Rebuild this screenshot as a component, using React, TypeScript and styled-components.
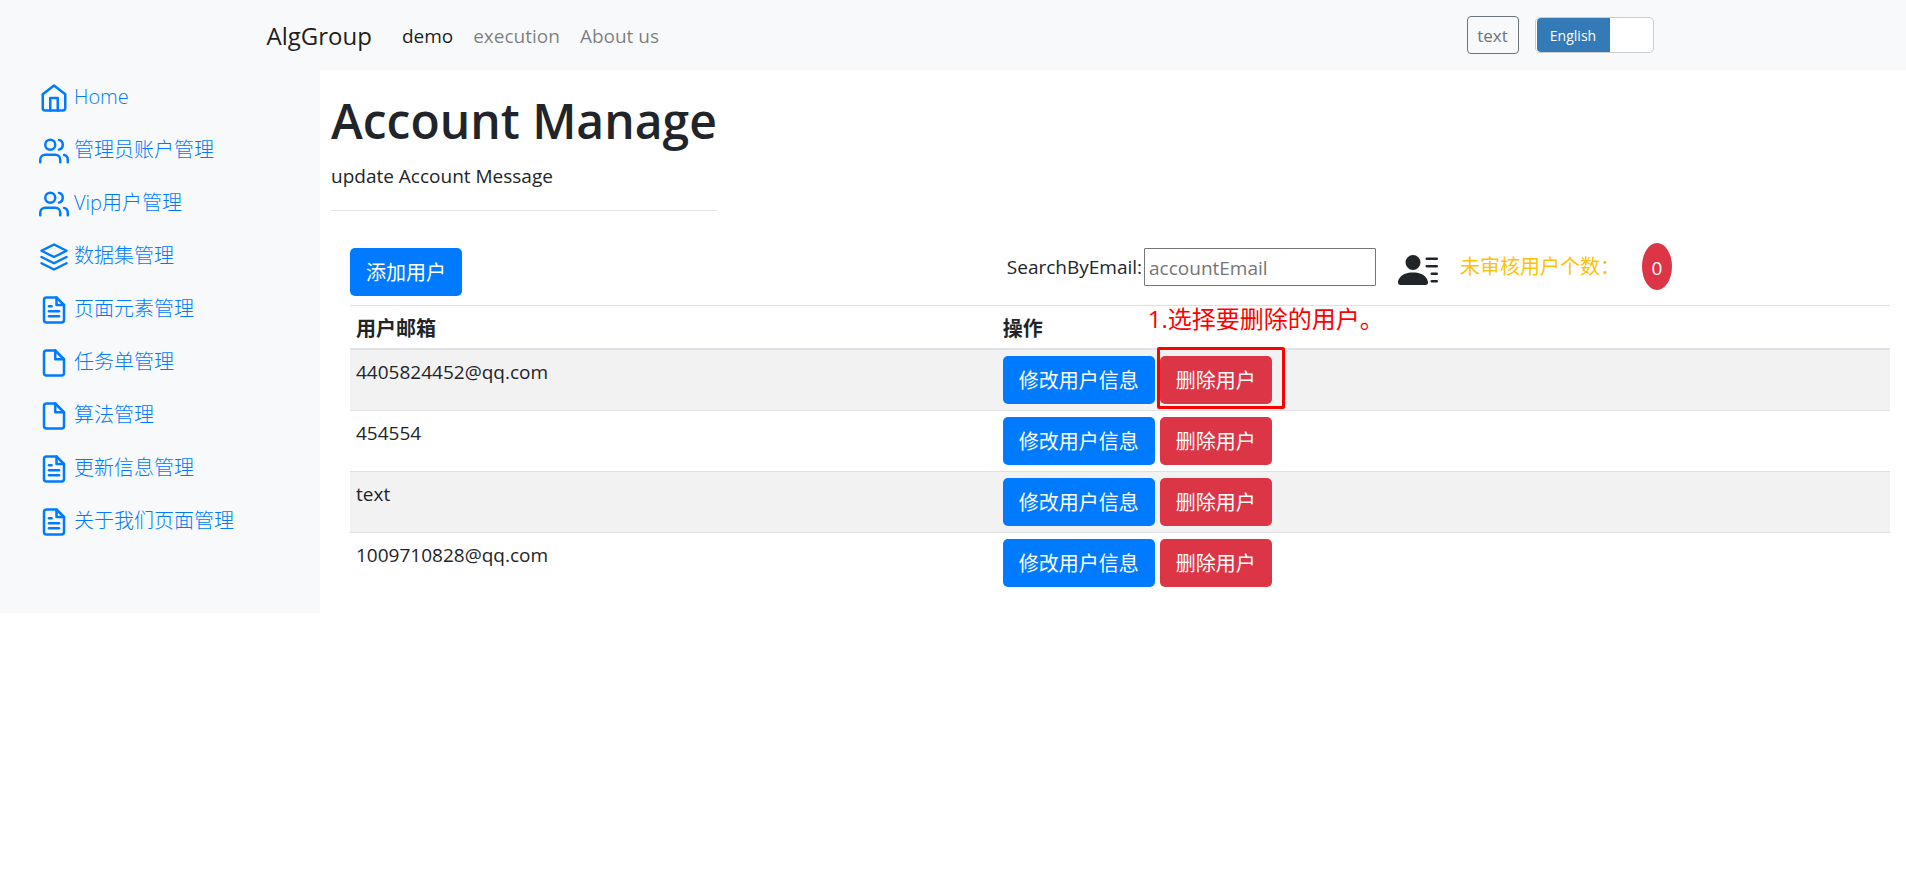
import React, { useState } from "react";
import styled, { createGlobalStyle, css } from "styled-components";
import { BsPersonLinesFill } from "react-icons/bs";

const GlobalStyle = createGlobalStyle`
  *, *::before, *::after { box-sizing: border-box; }
  body {
    margin: 0;
    background: #fff;
    color: #212529;
    font-family: "Open Sans", "Noto Sans CJK SC", sans-serif;
    font-size: 19px;
    line-height: 30px;
  }
  button, input { font-family: inherit; font-size: inherit; line-height: inherit; }
  a { text-decoration: none; }
`;

const TopBar = styled.header`
  background: #f8f9fa;
`;

const TopBarInner = styled.div`
  display: flex;
  align-items: center;
  max-width: 1425px;
  height: 70px;
  margin: 0 auto;
  padding: 0 12px 0 26px;
`;

const Brand = styled.a`
  margin-right: 30px;
  padding-top: 2px;
  color: rgba(0, 0, 0, 0.9);
  font-size: 24px;
`;

const TopNav = styled.nav`
  display: flex;
  flex: 1;
  gap: 20px;
  padding-top: 2px;
`;

const TopNavLink = styled.a<{ $active?: boolean }>`
  color: ${(p) => (p.$active ? "rgba(0, 0, 0, 0.9)" : "rgba(0, 0, 0, 0.5)")};
`;

const OutlineButton = styled.button`
  width: 52px;
  height: 38px;
  margin-right: 16px;
  padding: 2px 0 0;
  border: 1px solid #6c757d;
  border-radius: 4px;
  background: transparent;
  color: #6c757d;
  font-size: 17px;
`;

const Switch = styled.button<{ $on: boolean }>`
  display: flex;
  justify-content: ${(p) => (p.$on ? "flex-start" : "flex-end")};
  width: 119px;
  height: 36px;
  padding: 0 1px;
  border: 1px solid #ccc;
  border-radius: 5px;
  overflow: hidden;
  background: #fff;
`;

const SwitchFace = styled.span`
  width: 73px;
  height: 34px;
  border-radius: 4px 0 0 4px;
  background: #337ab7;
  color: #fff;
  font-size: 14px;
  line-height: 36px;
  text-align: center;
`;

const Body = styled.div`
  display: flex;
`;

const Sidebar = styled.nav`
  flex: 0 0 320px;
  background: #f8f9fa;
`;

const SideList = styled.ul`
  margin: 0;
  padding: 0 0 0 39px;
  list-style: none;
`;

const SideLink = styled.a`
  display: flex;
  align-items: center;
  gap: 5px;
  height: 53px;
  color: #007bff;
  font-size: 20px;
  font-weight: 300;

  svg { margin-top: 3px; }
`;

const Main = styled.main`
  flex: 1;
  min-width: 0;
  padding: 21px 16px 20px 11px;
`;

const Intro = styled.section`
  width: fit-content;
  padding-bottom: 19px;
  border-bottom: 1px solid #e5e5e5;
`;

const Title = styled.h1`
  margin: 0 0 10px;
  font-size: 48px;
  font-weight: 600;
  line-height: 60px;
`;

const Subtitle = styled.p`
  margin: 0;
`;

const Content = styled.section`
  padding: 32px 0 0 19px;
`;

const Toolbar = styled.div`
  display: grid;
  grid-template-columns: 42% 1fr;
  height: 62px;
  padding-top: 5px;
`;

const SearchArea = styled.div`
  display: flex;
  align-items: flex-start;
  gap: 22px;
  padding-left: 10px;

  svg { margin-top: 2px; }
`;

const SearchLabel = styled.label`
  display: flex;
  align-items: center;
  gap: 2px;
  white-space: nowrap;
`;

const SearchInput = styled.input`
  width: 232px;
  height: 38px;
  padding: 2px 4px 0;
  border: 1px solid #767676;
  border-radius: 1px;

  &::placeholder { color: #757575; opacity: 1; }
`;

const PendingText = styled.span`
  color: #ffc107;
  font-size: 20px;
  line-height: 38px;
`;

const PendingCount = styled.span`
  width: 30px;
  height: 47px;
  margin-top: -5px;
  border-radius: 50%;
  background: #dc3545;
  color: #fff;
  line-height: 50px;
  text-align: center;
`;

const Button = styled.button<{ $tone: "primary" | "danger" }>`
  height: 48px;
  padding: 2px 16px 0;
  border: 0;
  border-radius: 5px;
  background: ${(p) => (p.$tone === "primary" ? "#007bff" : "#dc3545")};
  color: #fff;
  font-size: 20px;
  white-space: nowrap;
`;

const Table = styled.table`
  width: 100%;
  border-collapse: separate;
  border-spacing: 0;
  table-layout: fixed;
  border-top: 1px solid #dee2e6;
`;

const HeadCell = styled.th<{ $wide?: boolean }>`
  ${(p) => p.$wide && css`width: 42%;`}
  height: 44px;
  padding: 8px 6px 4px;
  border-bottom: 2px solid #dee2e6;
  font-size: 20px;
  font-weight: 700;
  text-align: left;
`;

const Row = styled.tr`
  &:nth-child(odd) { background: #f2f2f2; }
  &:not(:last-child) td { border-bottom: 1px solid #dee2e6; }
`;

const Cell = styled.td`
  padding: 6px;
  vertical-align: top;
`;

const Email = styled.div`
  padding-top: 1px;
`;

const Actions = styled.div`
  display: flex;
  gap: 5px;
`;

const Marked = styled.div`
  position: relative;
`;

const MarkBox = styled.div`
  position: absolute;
  top: -9px;
  left: -3px;
  width: 128px;
  height: 62px;
  border: 3px solid #ff0000;
  border-radius: 2px;
  pointer-events: none;
`;

const MarkText = styled.div`
  position: absolute;
  bottom: 70px;
  left: -12px;
  color: #ff0000;
  font-size: 24px;
  white-space: nowrap;
`;

type IconName = "home" | "users" | "layers" | "fileText" | "file";

const iconShapes: Record<IconName, React.ReactNode> = {
  home: (
    <>
      <path d="M3 9l9-7 9 7v11a2 2 0 0 1-2 2H5a2 2 0 0 1-2-2z" />
      <polyline points="9 22 9 12 15 12 15 22" />
    </>
  ),
  users: (
    <>
      <path d="M17 21v-2a4 4 0 0 0-4-4H5a4 4 0 0 0-4 4v2" />
      <circle cx="9" cy="7" r="4" />
      <path d="M23 21v-2a4 4 0 0 0-3-3.87" />
      <path d="M16 3.13a4 4 0 0 1 0 7.75" />
    </>
  ),
  layers: (
    <>
      <polygon points="12 2 2 7 12 12 22 7 12 2" />
      <polyline points="2 17 12 22 22 17" />
      <polyline points="2 12 12 17 22 12" />
    </>
  ),
  fileText: (
    <>
      <path d="M14 2H6a2 2 0 0 0-2 2v16a2 2 0 0 0 2 2h12a2 2 0 0 0 2-2V8z" />
      <polyline points="14 2 14 8 20 8" />
      <line x1="16" y1="13" x2="8" y2="13" />
      <line x1="16" y1="17" x2="8" y2="17" />
      <polyline points="10 9 9 9 8 9" />
    </>
  ),
  file: (
    <>
      <path d="M13 2H6a2 2 0 0 0-2 2v16a2 2 0 0 0 2 2h12a2 2 0 0 0 2-2V9z" />
      <polyline points="13 2 13 9 20 9" />
    </>
  ),
};

const SideIcon = ({ name }: { name: IconName }) => (
  <svg
    width="30"
    height="30"
    viewBox="0 0 24 24"
    fill="none"
    stroke="currentColor"
    strokeWidth="2"
    strokeLinecap="round"
    strokeLinejoin="round"
    aria-hidden="true"
  >
    {iconShapes[name]}
  </svg>
);

const sideItems: { icon: IconName; label: string }[] = [
  { icon: "home", label: "Home" },
  { icon: "users", label: "管理员账户管理" },
  { icon: "users", label: "Vip用户管理" },
  { icon: "layers", label: "数据集管理" },
  { icon: "fileText", label: "页面元素管理" },
  { icon: "file", label: "任务单管理" },
  { icon: "file", label: "算法管理" },
  { icon: "fileText", label: "更新信息管理" },
  { icon: "fileText", label: "关于我们页面管理" },
];

const accounts = ["4405824452@qq.com", "454554", "text", "1009710828@qq.com"];

export default function App() {
  const [english, setEnglish] = useState(true);
  const [query, setQuery] = useState("");

  return (
    <>
      <GlobalStyle />
      <TopBar>
        <TopBarInner>
          <Brand href="#">AlgGroup</Brand>
          <TopNav>
            <TopNavLink href="#demo" $active>demo</TopNavLink>
            <TopNavLink href="#execution">execution</TopNavLink>
            <TopNavLink href="#about">About us</TopNavLink>
          </TopNav>
          <OutlineButton type="button">text</OutlineButton>
          <Switch
            type="button"
            role="switch"
            aria-checked={english}
            $on={english}
            onClick={() => setEnglish(!english)}
          >
            <SwitchFace>{english ? "English" : "中文"}</SwitchFace>
          </Switch>
        </TopBarInner>
      </TopBar>
      <Body>
        <Sidebar>
          <SideList>
            {sideItems.map((item) => (
              <li key={item.label}>
                <SideLink href="#">
                  <SideIcon name={item.icon} />
                  <span>{item.label}</span>
                </SideLink>
              </li>
            ))}
          </SideList>
        </Sidebar>
        <Main>
          <Intro>
            <Title>Account Manage</Title>
            <Subtitle>update Account Message</Subtitle>
          </Intro>
          <Content>
            <Toolbar>
              <div>
                <Button type="button" $tone="primary">添加用户</Button>
              </div>
              <SearchArea>
                <SearchLabel>
                  SearchByEmail:
                  <SearchInput
                    type="text"
                    placeholder="accountEmail"
                    value={query}
                    onChange={(e) => setQuery(e.target.value)}
                  />
                </SearchLabel>
                <BsPersonLinesFill size={40} />
                <PendingText>未审核用户个数：</PendingText>
                <PendingCount>0</PendingCount>
              </SearchArea>
            </Toolbar>
            <Table>
              <thead>
                <tr>
                  <HeadCell scope="col" $wide>用户邮箱</HeadCell>
                  <HeadCell scope="col">操作</HeadCell>
                </tr>
              </thead>
              <tbody>
                {accounts.map((email, i) => (
                  <Row key={email}>
                    <Cell>
                      <Email>{email}</Email>
                    </Cell>
                    <Cell>
                      <Actions>
                        <Button type="button" $tone="primary">修改用户信息</Button>
                        <Marked>
                          <Button type="button" $tone="danger">删除用户</Button>
                          {i === 0 && (
                            <>
                              <MarkBox />
                              <MarkText>1.选择要删除的用户。</MarkText>
                            </>
                          )}
                        </Marked>
                      </Actions>
                    </Cell>
                  </Row>
                ))}
              </tbody>
            </Table>
          </Content>
        </Main>
      </Body>
    </>
  );
}
